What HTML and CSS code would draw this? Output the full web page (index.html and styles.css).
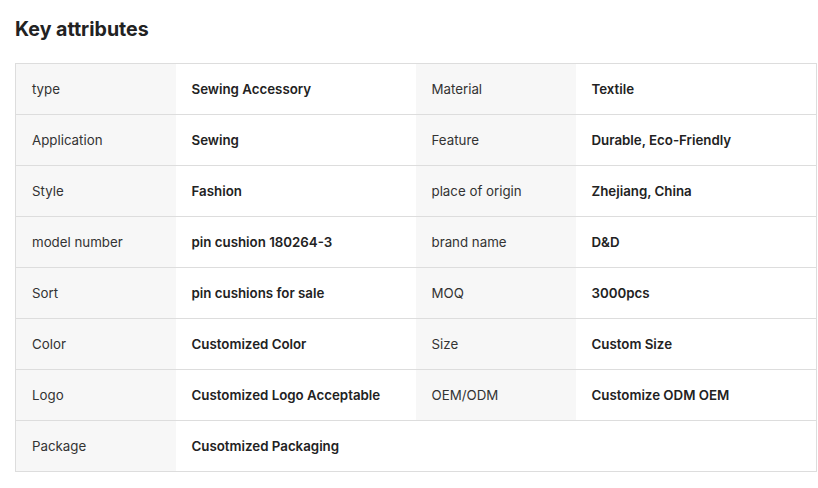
FILE: index.html
```html
<!DOCTYPE html>
<html lang="en">
<head>
    <meta charset="UTF-8">
    <meta name="viewport" content="width=device-width, initial-scale=1.0">
    <title>Key attributes</title>
    <link rel="stylesheet" href="styles.css">
</head>
<body>

    <!-- Title -->
    <h2 class="section-title">Key attributes</h2>

    <!-- Attribute table -->
    <table class="attr-table">
        <colgroup>
            <col class="col-label">
            <col class="col-value">
            <col class="col-label">
            <col>
        </colgroup>
        <tr>
            <td class="attr-label">type</td>
            <td class="attr-value">Sewing Accessory</td>
            <td class="attr-label">Material</td>
            <td class="attr-value">Textile</td>
        </tr>
        <tr>
            <td class="attr-label">Application</td>
            <td class="attr-value">Sewing</td>
            <td class="attr-label">Feature</td>
            <td class="attr-value">Durable, Eco-Friendly</td>
        </tr>
        <tr>
            <td class="attr-label">Style</td>
            <td class="attr-value">Fashion</td>
            <td class="attr-label">place of origin</td>
            <td class="attr-value">Zhejiang, China</td>
        </tr>
        <tr>
            <td class="attr-label">model number</td>
            <td class="attr-value">pin cushion 180264-3</td>
            <td class="attr-label">brand name</td>
            <td class="attr-value">D&amp;D</td>
        </tr>
        <tr>
            <td class="attr-label">Sort</td>
            <td class="attr-value">pin cushions for sale</td>
            <td class="attr-label">MOQ</td>
            <td class="attr-value">3000pcs</td>
        </tr>
        <tr>
            <td class="attr-label">Color</td>
            <td class="attr-value">Customized Color</td>
            <td class="attr-label">Size</td>
            <td class="attr-value">Custom Size</td>
        </tr>
        <tr>
            <td class="attr-label">Logo</td>
            <td class="attr-value">Customized Logo Acceptable</td>
            <td class="attr-label">OEM/ODM</td>
            <td class="attr-value">Customize ODM OEM</td>
        </tr>
        <tr>
            <td class="attr-label">Package</td>
            <td class="attr-value" colspan="3">Cusotmized Packaging</td>
        </tr>
    </table>

</body>
</html>
```

FILE: styles.css
```css
body {
    font-family: Inter, "Noto Sans", Arial, sans-serif;
    margin: 0;
    padding: 0 1px 0 15px;
    color: #222;
    background: #fff;
}
.section-title {
    font-size: 19.6px;
    font-weight: 700;
    color: #222;
    margin: 0 0 21px;
    padding-top: 16px;
    line-height: 26px;
}
.attr-table {
    width: 802px;
    border-collapse: collapse;
    table-layout: fixed;
    border: 1px solid #ddd;
    font-size: 13.3px;
}
.col-label {
    width: 160px;
}
.col-value {
    width: 240px;
}
.attr-table tr {
    border-bottom: 1px solid #ddd;
}
.attr-table td {
    height: 51px;
    padding: 0 16px;
    box-sizing: border-box;
}
.attr-label {
    background-color: #f7f7f7;
    color: #333;
}
.attr-value {
    font-weight: 600;
    color: #222;
}
```
